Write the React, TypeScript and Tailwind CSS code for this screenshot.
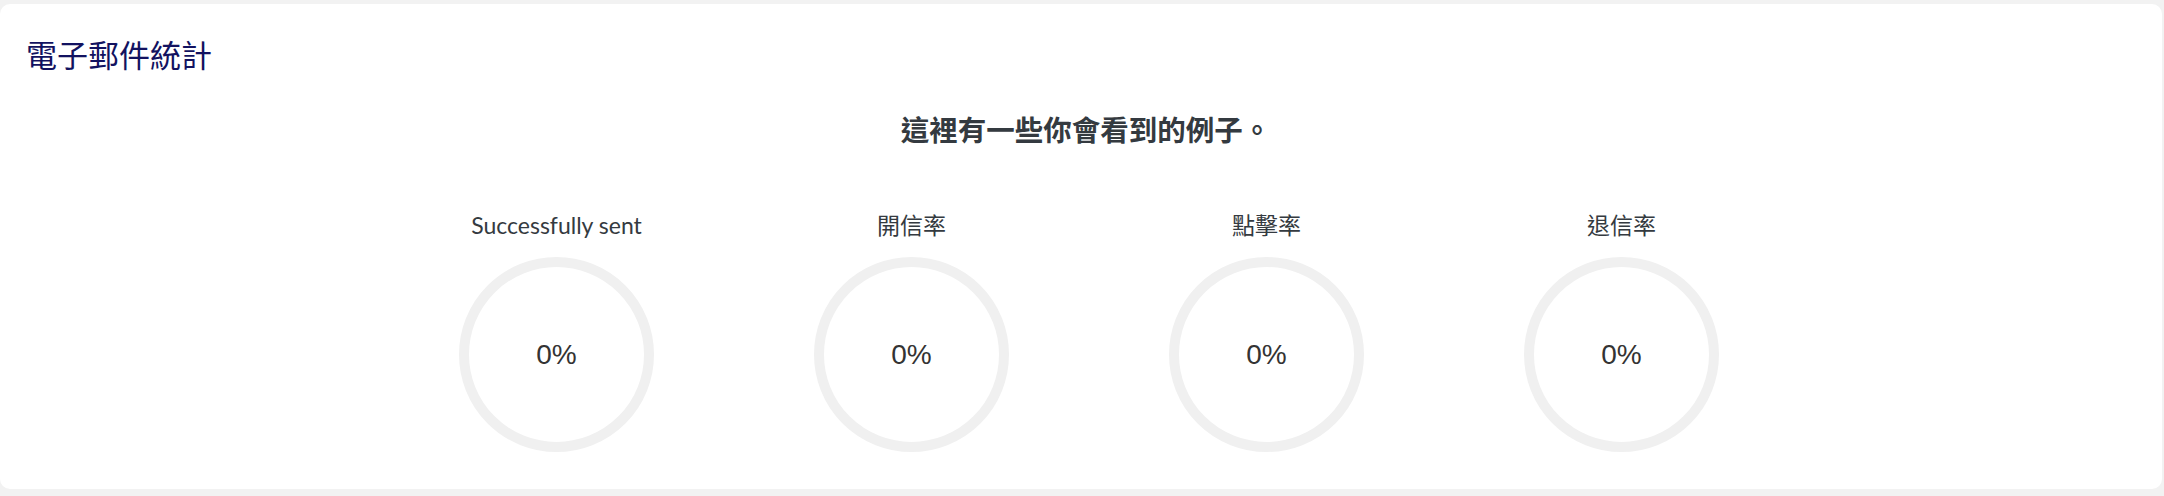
import React from "react";

const stats = [
  { label: "Successfully sent", value: "0%" },
  { label: "開信率", value: "0%" },
  { label: "點擊率", value: "0%" },
  { label: "退信率", value: "0%" },
];

export default function App() {
  return (
    <div className="w-[2164px] h-[496px] bg-[#f2f2f2] pt-[4px] overflow-hidden">
      <div className="h-[485px] mr-[2px] bg-white rounded-[10px] flex flex-col">
        <div
          className="pl-[26px] pt-[32px] text-[31px] leading-[36px] text-[#121260] font-normal"
          style={{ fontFamily: '"Noto Sans CJK TC", "Noto Sans", sans-serif' }}
        >
          電子郵件統計
        </div>
        <div
          className="mt-[39px] pl-[10px] text-center text-[28.5px] leading-[36px] font-bold text-[#343a40]"
          style={{ fontFamily: '"Noto Sans CJK TC", "Noto Sans", sans-serif' }}
        >
          這裡有一些你會看到的例子。
        </div>
        <div className="mt-[64px] flex justify-center pl-[16px]">
          {stats.map((s) => (
            <div key={s.label} className="w-[355px] flex flex-col items-center">
              <div
                className="text-[23px] leading-[28px] text-[#343a40]"
                style={{ fontFamily: 'Lato, "Noto Sans CJK TC", sans-serif' }}
              >
                {s.label}
              </div>
              <div className="mt-[18px] w-[195px] h-[195px] rounded-full border-[10px] border-[#f0f0f0] flex items-center justify-center">
                <span
                  className="text-[28px] leading-none text-[#333333]"
                  style={{ fontFamily: '"Liberation Sans", Arial, sans-serif' }}
                >
                  {s.value}
                </span>
              </div>
            </div>
          ))}
        </div>
      </div>
    </div>
  );
}
